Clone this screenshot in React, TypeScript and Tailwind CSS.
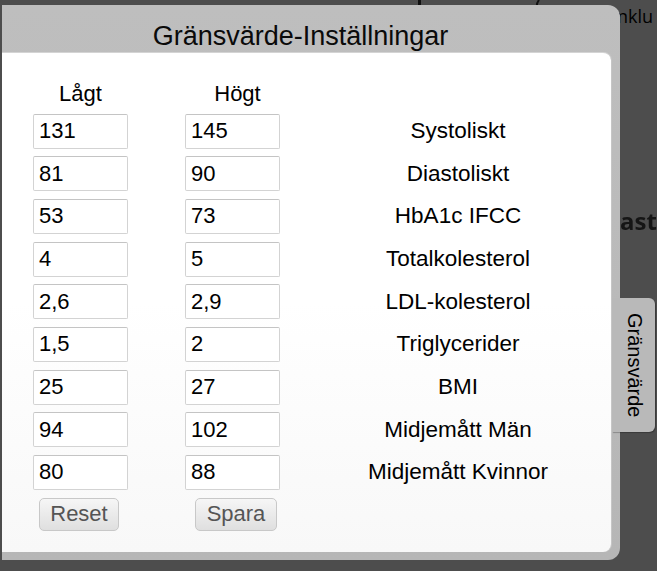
import React from "react";

const rows: [string, string, string][] = [
  ["131", "145", "Systoliskt"],
  ["81", "90", "Diastoliskt"],
  ["53", "73", "HbA1c IFCC"],
  ["4", "5", "Totalkolesterol"],
  ["2,6", "2,9", "LDL-kolesterol"],
  ["1,5", "2", "Triglycerider"],
  ["25", "27", "BMI"],
  ["94", "102", "Midjemått Män"],
  ["80", "88", "Midjemått Kvinnor"],
];

function Field({ value }: { value: string }) {
  return (
    <div className="h-[35px] w-[95px] rounded-[2px] border border-[#d3d3d3] border-t-[#c4c4c4] bg-white pl-[5px] flex items-center text-[22px] leading-[22px] text-black">
      {value}
    </div>
  );
}

export default function App() {
  return (
    <div
      className="relative w-[657px] h-[571px] overflow-hidden bg-[#4d4d4d]"
      style={{ fontFamily: '"Liberation Sans", Arial, sans-serif' }}
    >
      {/* background page fragments */}
      <div className="absolute left-[418px] top-0 w-[3px] h-[8px] bg-[#111]" />
      <svg className="absolute left-[533px] top-0" width="8" height="12" viewBox="0 0 8 12">
        <path d="M6 0 Q2 5 5 11" stroke="#111" strokeWidth="2" fill="none" />
      </svg>
      <div
        className="absolute left-[617px] top-[5px] text-[18px] text-black leading-[22px]"
        style={{ fontFamily: '"Open Sans", sans-serif' }}
      >
        nklu
      </div>
      <div
        className="absolute left-[620px] top-[204px] text-[24px] font-bold text-[#151515] leading-[34px] blur-[0.5px]"
        style={{ fontFamily: '"Open Sans", sans-serif' }}
      >
        ast
      </div>

      {/* dialog */}
      <div className="absolute left-[2px] top-[5px] w-[618px] h-[555px] rounded-tr-[12px] rounded-br-[12px] bg-gradient-to-b from-[#bebebe] to-[#b6b6b6] flex flex-col pr-[9px] pb-[8px]">
        <div className="h-[47px] shrink-0 pt-[18px] pr-[12px] flex justify-center">
          <div className="text-[27px] leading-[27px] text-[#0a0a0a]">Gränsvärde-Inställningar</div>
        </div>
        <div className="flex-1 rounded-tr-[8px] rounded-br-[8px] border-t border-[#d4d4d4] bg-gradient-to-b from-white via-white to-[#f8f8f8] pl-[31px] pt-[30px] shadow-[1px_0_0_#c6c6c6]">
          <div className="grid grid-cols-[95px_95px_242px] gap-x-[57px] gap-y-[7.67px]">
            <div className="h-[23px] text-center text-[22px] leading-[22px] text-black">Lågt</div>
            <div className="h-[23px] text-center text-[22px] leading-[22px] text-black pl-[10px]">Högt</div>
            <div className="h-[23px]" />
            {rows.map(([lo, hi, label]) => (
              <React.Fragment key={label}>
                <Field value={lo} />
                <Field value={hi} />
                <div className="h-[35px] flex items-center justify-center text-[22.5px] leading-[22px] text-black whitespace-nowrap">
                  {label}
                </div>
              </React.Fragment>
            ))}
            <div className="pl-[6px]">
              <button className="h-[33px] w-[80px] rounded-[5px] border border-[#c8c8c8] bg-gradient-to-b from-[#f6f6f6] to-[#dfdfdf] text-[22px] leading-[22px] text-[#555]">
                Reset
              </button>
            </div>
            <div className="pl-[10px]">
              <button className="h-[33px] w-[82px] rounded-[5px] border border-[#c8c8c8] bg-gradient-to-b from-[#f6f6f6] to-[#dfdfdf] text-[22px] leading-[22px] text-[#555]">
                Spara
              </button>
            </div>
            <div />
          </div>
        </div>
      </div>

      {/* side tab */}
      <div className="absolute left-[612px] top-[298px] w-[43px] h-[134px] rounded-tr-[6px] rounded-br-[6px] bg-[#b9b9b9] shadow-[1px_1px_1px_rgba(0,0,0,0.25)] flex items-center justify-center">
        <div
          className="text-[20px] leading-[20px] text-black pl-[2px]"
          style={{ writingMode: "vertical-rl" }}
        >
          Gränsvärde
        </div>
      </div>
    </div>
  );
}
